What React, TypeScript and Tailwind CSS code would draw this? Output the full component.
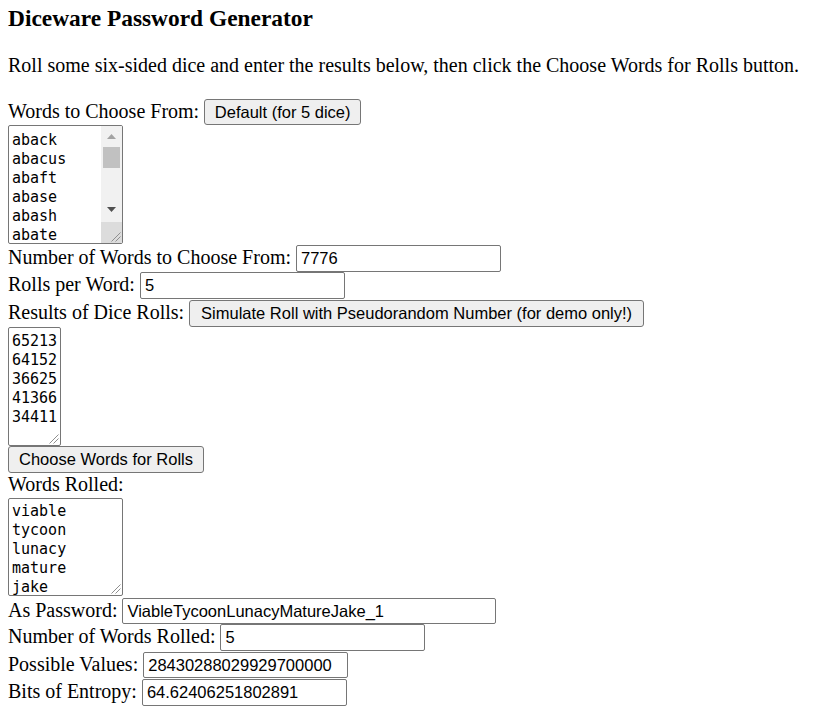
import React from 'react';

const sans = "font-['Liberation_Sans',Arial,sans-serif]";
const mono = "font-['DejaVu_Sans_Mono','Liberation_Mono',monospace]";

const Grip = () => (
  <svg width="12" height="12" viewBox="0 0 12 12" className="absolute right-[1px] bottom-[1px]">
    <path d="M11.5 2.5 L2.5 11.5 M11.5 6.5 L6.5 11.5" stroke="#8f8f8f" strokeWidth="1" fill="none" />
  </svg>
);

const Box = ({ lines, width, height, pad = 'pt-[3px]', scroll = false }: { lines: string[]; width: string; height: string; pad?: string; scroll?: boolean }) => (
  <div className={`relative flex ${width} ${height} border border-[#767676] rounded-[2px] bg-white overflow-hidden`}>
    <textarea
      readOnly
      value={lines.join('\n')}
      className={`flex-1 min-w-0 h-full resize-none overflow-hidden bg-transparent outline-none ${pad} pl-[3px] ${mono} text-[15px] leading-[19px] text-black`}
    />
    {scroll ? (
      <div className="w-[21px] flex flex-col bg-[#f1f1f1]">
        <div className="h-[21px] flex items-center justify-center">
          <svg width="9" height="5" viewBox="0 0 9 5"><path d="M0 5 L4.5 0 L9 5 Z" fill="#a3a3a3" /></svg>
        </div>
        <div className="h-[21px] mx-[2px] bg-[#c1c1c1]" />
        <div className="flex-1" />
        <div className="h-[21px] flex items-center justify-center pb-[4px]">
          <svg width="9" height="5" viewBox="0 0 9 5"><path d="M0 0 L9 0 L4.5 5 Z" fill="#505050" /></svg>
        </div>
        <div className="relative h-[21px] bg-[#dcdcdc]">
          <Grip />
        </div>
      </div>
    ) : (
      <Grip />
    )}
  </div>
);

const Btn = ({ text, width, height = 'h-[27px]' }: { text: string; width: string; height?: string }) => (
  <button className={`${width} ${height} ${sans} text-[16.5px] text-black bg-[#efefef] border border-[#767676] rounded-[3px] flex-none`}>
    {text}
  </button>
);

const Field = ({ label, value, width = 'w-[205px]', height = 'h-[27px]', extra = '' }: { label: string; value: string; width?: string; height?: string; extra?: string }) => (
  <div className={`flex items-baseline gap-[5px] ${extra}`}>
    <span>{label}</span>
    <input
      readOnly
      value={value}
      className={`${width} ${height} px-[4px] ${sans} text-[16.5px] text-black border border-[#767676] rounded-[2px] outline-none`}
    />
  </div>
);

const App = () => {
  const words = ['aback', 'abacus', 'abaft', 'abase', 'abash', 'abate', 'abbey'];
  const rolls = ['65213', '64152', '36625', '41366', '34411'];
  const rolled = ['viable', 'tycoon', 'lunacy', 'mature', 'jake'];

  return (
    <div className="min-h-screen bg-white px-2 pb-4 text-black text-[20px] leading-[23px] font-['Liberation_Serif','Times_New_Roman',serif]">
      <h3 className="pt-[5px] text-[23.4px] font-bold leading-[27px]">Diceware Password Generator</h3>
      <p className="mt-[22px] whitespace-nowrap">
        Roll some six-sided dice and enter the results below, then click the Choose Words for Rolls button.
      </p>

      <div className="mt-[22px] flex items-baseline gap-[5px]">
        <span>Words to Choose From:</span>
        <Btn text="Default (for 5 dice)" width="w-[157px]" height="h-[26px]" />
      </div>
      <Box lines={words} width="w-[115px]" height="h-[119px]" pad="pt-[5px]" scroll />

      <Field extra="mt-[1px]" label="Number of Words to Choose From:" value="7776" />
      <Field label="Rolls per Word:" value="5" />

      <div className="mt-[1px] flex items-baseline gap-[5px]">
        <span>Results of Dice Rolls:</span>
        <Btn text="Simulate Roll with Pseudorandom Number (for demo only!)" width="w-[455px]" />
      </div>
      <Box lines={rolls} width="w-[53px]" height="h-[119px]" pad="pt-[4px]" />
      <Btn text="Choose Words for Rolls" width="w-[196px]" />

      <div>Words Rolled:</div>
      <div className="mt-[2px]">
        <Box lines={rolled} width="w-[115px]" height="h-[98px]" />
      </div>

      <Field extra="mt-[2px]" label="As Password:" value="ViableTycoonLunacyMatureJake_1" width="w-[374px]" height="h-[26px]" />
      <Field label="Number of Words Rolled:" value="5" />
      <Field extra="mt-[1px]" label="Possible Values:" value="28430288029929700000" height="h-[26px]" />
      <Field extra="mt-[1px]" label="Bits of Entropy:" value="64.62406251802891" />
    </div>
  );
};

export default App;
